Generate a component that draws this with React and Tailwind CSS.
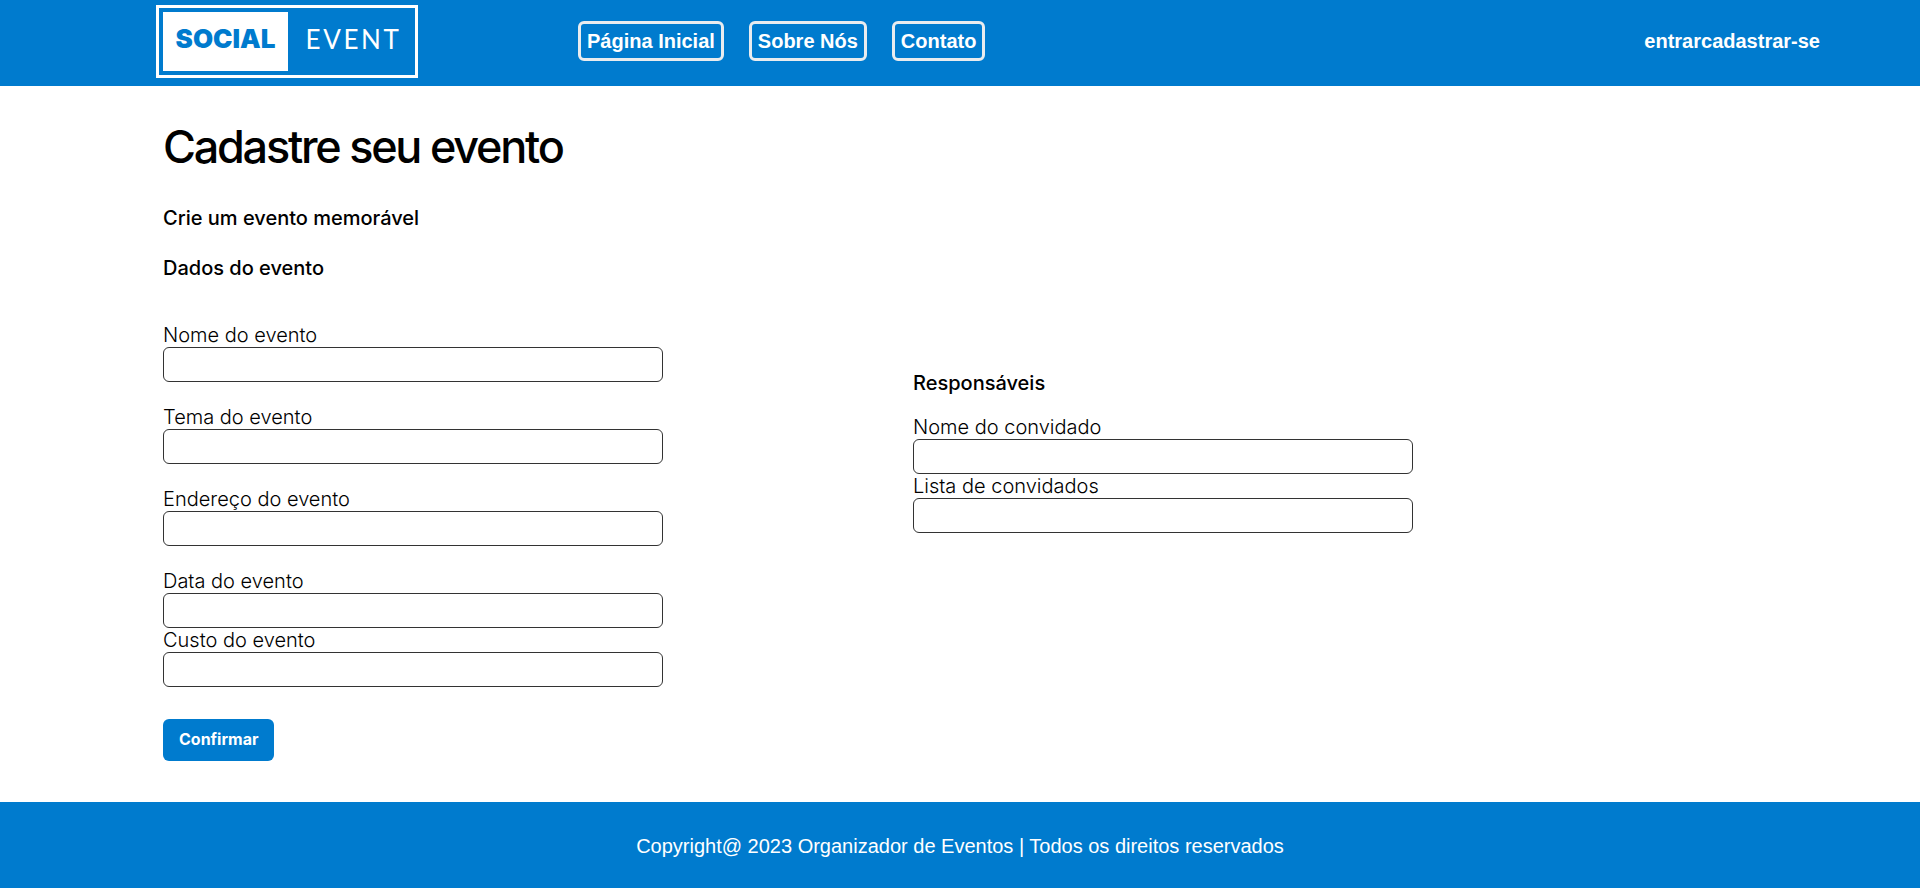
const NAV_LINKS = ["Página Inicial", "Sobre Nós", "Contato"];

function Logo() {
  return (
    <a
      href="#"
      aria-label="Social Event"
      className="flex h-[73px] w-[262px] shrink-0 border-3 border-white p-1 font-['Inter',sans-serif] leading-none"
    >
      <span className="flex w-[125px] items-center justify-center bg-white pb-1 text-[26px] font-black text-[#007bce]">
        SOCIAL
      </span>
      <span className="flex flex-1 items-center justify-center pb-1 pl-2 font-['Lato',sans-serif] text-[26px] font-normal tracking-widest text-white">
        EVENT
      </span>
    </a>
  );
}

function Field({ id, label }) {
  return (
    <div className="flex flex-col">
      <label htmlFor={id} className="text-xl leading-6 font-light">
        {label}
      </label>
      <input
        id={id}
        name={id}
        type="text"
        className="h-[35px] w-full rounded-md border border-[#333] bg-white px-2"
      />
    </div>
  );
}

export default function App() {
  return (
    <div className="flex min-h-screen flex-col bg-white font-['Inter',sans-serif] text-black">
      <header className="flex h-[86px] items-center bg-[#007bce] pr-[100px] pb-1 pl-[156px] font-['Liberation_Sans',sans-serif] text-xl font-bold text-white">
        <Logo />
        <nav className="ml-40 flex gap-[25px]">
          {NAV_LINKS.map((text) => (
            <a
              key={text}
              href="#"
              className="rounded-md border-3 border-[#e9ecef] px-[6px] py-[5px] leading-6"
            >
              {text}
            </a>
          ))}
        </nav>
        <div className="ml-auto flex">
          <a href="#">entrar</a>
          <a href="#">cadastrar-se</a>
        </div>
      </header>

      <main className="flex-1 px-[163px] pt-[31px] pb-10">
        <h1 className="text-[45px] leading-[60px] font-medium tracking-tighter">Cadastre seu evento</h1>
        <h2 className="mt-[29px] text-xl leading-6 font-medium">Crie um evento memorável</h2>
        <h2 className="mt-[26px] text-xl leading-6 font-medium">Dados do evento</h2>

        <form onSubmit={(event) => event.preventDefault()}>
          <div className="mt-[43px] flex gap-[250px]">
            <div className="flex w-[500px] flex-col gap-[23px]">
              <Field id="nome-evento" label="Nome do evento" />
              <Field id="tema-evento" label="Tema do evento" />
              <Field id="endereco-evento" label="Endereço do evento" />
              <div>
                <Field id="data-evento" label="Data do evento" />
                <Field id="custo-evento" label="Custo do evento" />
              </div>
            </div>
            <div className="w-[500px] pt-12">
              <h3 className="mb-5 text-xl leading-6 font-medium">Responsáveis</h3>
              <Field id="nome-convidado" label="Nome do convidado" />
              <Field id="lista-convidados" label="Lista de convidados" />
            </div>
          </div>
          <button
            type="submit"
            className="mt-8 h-[42px] rounded-md bg-[#007bce] px-4 pb-[2px] text-base font-bold text-white"
          >
            Confirmar
          </button>
        </form>
      </main>

      <footer className="flex h-[86px] items-center justify-center bg-[#007bce] pt-[2px] font-['Liberation_Sans',sans-serif] text-xl text-white">
        <p>Copyright@ 2023 Organizador de Eventos | Todos os direitos reservados</p>
      </footer>
    </div>
  );
}
